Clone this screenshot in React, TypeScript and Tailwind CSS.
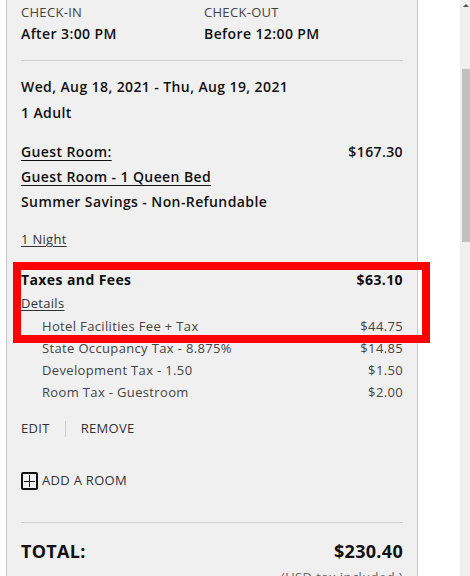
import React from "react";

const font = { fontFamily: '"Open Sans", "Liberation Sans", sans-serif' };

function Row({ children, className = "" }: { children: React.ReactNode; className?: string }) {
  return <div className={`flex h-[20px] items-center justify-between ${className}`}>{children}</div>;
}

export default function App() {
  const details: [string, string][] = [
    ["Hotel Facilities Fee + Tax", "$44.75"],
    ["State Occupancy Tax - 8.875%", "$14.85"],
    ["Development Tax - 1.50", "$1.50"],
    ["Room Tax - Guestroom", "$2.00"],
  ];
  return (
    <div className="relative flex h-[576px] w-[470px] overflow-hidden bg-white" style={font}>
      <div className="ml-[6px] h-[600px] w-[412px] shrink-0 border-x border-[#c9c9c9] bg-[#f0f0f0] px-[14px] pt-[3px]">
        <div className="grid grid-cols-[183px_1fr]">
          <div>
            <div className="flex h-[20px] items-center text-[13px] tracking-[0.3px] text-[#444]">CHECK-IN</div>
            <div className="flex h-[20px] items-center text-[14px] font-semibold tracking-[0.4px] text-[#111]">After 3:00 PM</div>
          </div>
          <div>
            <div className="flex h-[20px] items-center text-[13px] tracking-[0.3px] text-[#444]">CHECK-OUT</div>
            <div className="flex h-[20px] items-center text-[14px] font-semibold tracking-[0.4px] text-[#111]">Before 12:00 PM</div>
          </div>
        </div>
        <div className="mt-[17px] border-t border-[#cfcfcf]" />
        <Row className="mt-[15px] text-[14px] font-semibold tracking-[0.4px] text-[#111]">
          <span>Wed, Aug 18, 2021 - Thu, Aug 19, 2021</span>
        </Row>
        <Row className="mt-[6px] text-[14px] font-semibold tracking-[0.4px] text-[#111]">
          <span>1 Adult</span>
        </Row>
        <Row className="mt-[19px] text-[14px] font-semibold tracking-[0.4px] text-[#111]">
          <span className="underline underline-offset-[3px]">Guest Room:</span>
          <span>$167.30</span>
        </Row>
        <Row className="mt-[5px] text-[14px] font-semibold tracking-[0.4px] text-[#111]">
          <span className="underline underline-offset-[3px]">Guest Room - 1 Queen Bed</span>
        </Row>
        <Row className="mt-[5px] text-[14px] font-semibold tracking-[0.4px] text-[#111]">
          <span>Summer Savings - Non-Refundable</span>
        </Row>
        <Row className="mt-[19px] text-[13px] tracking-[0.3px] text-[#333]">
          <span className="underline underline-offset-[2px]">1 Night</span>
        </Row>
        <Row className="mt-[19px] text-[14px] font-bold tracking-[0.4px] text-[#111]">
          <span>Taxes and Fees</span>
          <span>$63.10</span>
        </Row>
        <Row className="mt-[5px] text-[13px] tracking-[0.3px] text-[#333]">
          <span className="underline underline-offset-[2px]">Details</span>
        </Row>
        <div className="mt-[3px] flex flex-col gap-[2px]">
          {details.map(([l, v]) => (
            <Row key={l} className="pl-[21px] text-[13px] tracking-[0.35px] text-[#444]">
              <span>{l}</span>
              <span>{v}</span>
            </Row>
          ))}
        </div>
        <div className="mt-[16px] flex h-[20px] items-center text-[13px] tracking-[0.3px] text-[#333]">
          <span>EDIT</span>
          <span className="mx-[15px] h-[16px] w-px bg-[#d0d0d0]" />
          <span>REMOVE</span>
        </div>
        <div className="mt-[32px] flex h-[20px] items-center text-[13px] tracking-[0.3px] text-[#333]">
          <span className="relative mr-[4px] flex h-[18px] w-[17px] items-center justify-center rounded-[2px] border-2 border-[#111]">
            <span className="absolute h-px w-[11px] bg-[#111]" />
            <span className="absolute h-[12px] w-px bg-[#111]" />
          </span>
          <span>ADD A ROOM</span>
        </div>
        <div className="mt-[31px] border-t border-[#cfcfcf]" />
        <div className="mt-[16px] flex h-[24px] items-center justify-between text-[18px] font-bold tracking-[0.3px] text-[#111]">
          <span>TOTAL:</span>
          <span>$230.40</span>
        </div>
        <div className="mt-[5px] flex h-[20px] items-center justify-end text-[13px] tracking-[0.4px] text-[#666]">
          <span>(USD tax included )</span>
        </div>
      </div>
      <div className="flex-1" />
      <div className="flex h-full w-[10px] shrink-0 flex-col bg-[#f0f0f0]">
        <div className="ml-[3px] mt-[4px] h-0 w-0 border-x-[3px] border-b-[3px] border-x-transparent border-b-[#505050]" />
        <div className="ml-[2px] mt-[62px] h-[173px] w-[8px] bg-[#c1c1c1]" />
      </div>
      <div className="pointer-events-none absolute left-[13px] top-[262px] h-[81px] w-[417px] border-[8px] border-[#ff0000]" />
    </div>
  );
}
